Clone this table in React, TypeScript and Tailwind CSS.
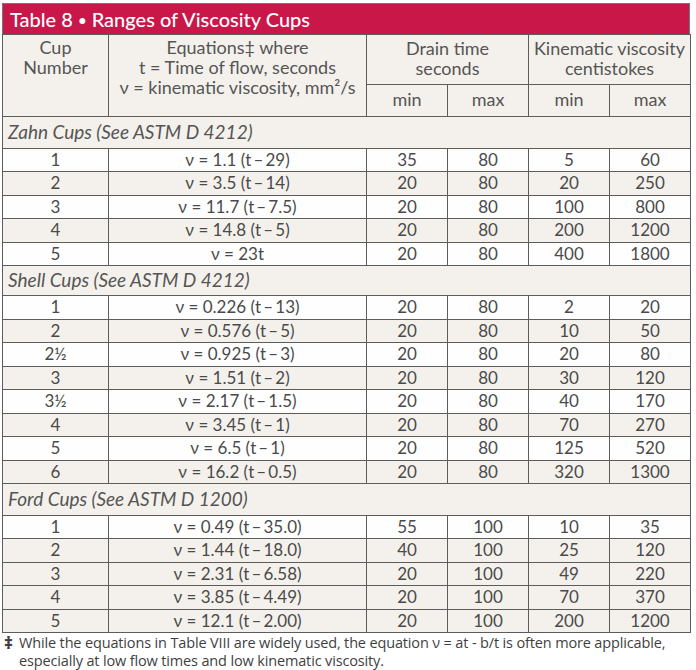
import React from "react";

type Row = { cup: string; eq: string; dmin: string; dmax: string; kmin: string; kmax: string; white: boolean };

const d = "\u2009\u2013\u2009";
const mk = (cup: string, a: string, b: string, dmin: string, dmax: string, kmin: string, kmax: string, white: boolean): Row => ({
  cup,
  eq: b === "" ? `\u03bd = ${a}` : `\u03bd = ${a} (t${d}${b})`,
  dmin,
  dmax,
  kmin,
  kmax,
  white,
});

const sections: { title: string; rows: Row[] }[] = [
  {
    title: "Zahn Cups (See ASTM D 4212)",
    rows: [
      mk("1", "1.1", "29", "35", "80", "5", "60", true),
      mk("2", "3.5", "14", "20", "80", "20", "250", false),
      mk("3", "11.7", "7.5", "20", "80", "100", "800", true),
      mk("4", "14.8", "5", "20", "80", "200", "1200", false),
      mk("5", "23t", "", "20", "80", "400", "1800", true),
    ],
  },
  {
    title: "Shell Cups (See ASTM D 4212)",
    rows: [
      mk("1", "0.226", "13", "20", "80", "2", "20", true),
      mk("2", "0.576", "5", "20", "80", "10", "50", false),
      mk("2\u00bd", "0.925", "3", "20", "80", "20", "80", true),
      mk("3", "1.51", "2", "20", "80", "30", "120", false),
      mk("3\u00bd", "2.17", "1.5", "20", "80", "40", "170", true),
      mk("4", "3.45", "1", "20", "80", "70", "270", false),
      mk("5", "6.5", "1", "20", "80", "125", "520", true),
      mk("6", "16.2", "0.5", "20", "80", "320", "1300", false),
    ],
  },
  {
    title: "Ford Cups (See ASTM D 1200)",
    rows: [
      mk("1", "0.49", "35.0", "55", "100", "10", "35", true),
      mk("2", "1.44", "18.0", "40", "100", "25", "120", false),
      mk("3", "2.31", "6.58", "20", "100", "49", "220", false),
      mk("4", "3.85", "4.49", "20", "100", "70", "370", false),
      mk("5", "12.1", "2.00", "20", "100", "200", "1200", false),
    ],
  },
];

const cell = "border border-[#5c5c5c] text-center p-0";

export default function App() {
  return (
    <div className="w-[696px] h-[670px] bg-white text-[#4a4a4a] overflow-hidden" style={{ fontFamily: "Lato, 'Open Sans', sans-serif" }}>
      <div className="ml-[2px] mt-[3px] w-[688px] border-t border-l border-r border-[#777]">
        <div className="h-[30px] bg-[#c9174a] text-white text-[20px] leading-[30px] pl-[7px] font-medium">
          Table 8 <span className="text-[15px] relative top-[-1px]">{"\u2022"}</span> Ranges of Viscosity Cups
        </div>
      </div>
      <table className="ml-[2px] w-[688px] table-fixed border-collapse text-[17px]">
        <colgroup>
          <col className="w-[106px]" />
          <col className="w-[258px]" />
          <col className="w-[81px]" />
          <col className="w-[81px]" />
          <col className="w-[81px]" />
          <col className="w-[81px]" />
        </colgroup>
        <tbody>
          <tr className="h-[50px] bg-[#f4f1ec] text-[18px] leading-[20px] text-[#555]">
            <td rowSpan={2} className={`${cell} align-top pt-[2px]`}>
              Cup
              <br />
              Number
            </td>
            <td rowSpan={2} className={`${cell} align-top pt-[2px]`}>
              Equations‡ where
              <br />t = Time of flow, seconds
              <br />
              {"\u03bd = kinematic viscosity, mm\u00b2/s"}
            </td>
            <td colSpan={2} className={`${cell} align-middle pb-[3px]`}>
              Drain time
              <br />
              seconds
            </td>
            <td colSpan={2} className={`${cell} align-middle pb-[3px]`}>
              Kinematic viscosity
              <br />
              centistokes
            </td>
          </tr>
          <tr className="h-[32px] bg-[#f4f1ec] text-[18px] text-[#555]">
            <td className={`${cell} pb-[2px]`}>min</td>
            <td className={`${cell} pb-[2px]`}>max</td>
            <td className={`${cell} pb-[2px]`}>min</td>
            <td className={`${cell} pb-[2px]`}>max</td>
          </tr>
          {sections.map((s, si) => (
            <React.Fragment key={s.title}>
              <tr className={`${si === 1 ? "h-[30px]" : "h-[31.5px]"} bg-[#f4f1ec]`}>
                <td colSpan={6} className="border border-[#5c5c5c] text-left pl-[5px] italic text-[19px] text-[#555]">
                  {s.title}
                </td>
              </tr>
              {s.rows.map((r, i) => (
                <tr key={i} className={`h-[23.5px] leading-[20px] ${r.white ? "bg-[#fefefe]" : "bg-[#f4f1ec]"}`}>
                  <td className={cell}>{r.cup}</td>
                  <td className={cell}>{r.eq}</td>
                  <td className={cell}>{r.dmin}</td>
                  <td className={cell}>{r.dmax}</td>
                  <td className={cell}>{r.kmin}</td>
                  <td className={cell}>{r.kmax}</td>
                </tr>
              ))}
            </React.Fragment>
          ))}
        </tbody>
      </table>
      <div className="flex pl-[4px] pt-[1px] text-[14.5px] leading-[18px] text-[#3f3f3f] whitespace-nowrap tracking-[-0.15px]" style={{ fontFamily: "'Open Sans', Lato, sans-serif" }}>
        <span className="w-[15px] font-extrabold text-[17px] leading-[18px]">‡</span>
        <span>
          While the equations in Table VIII are widely used, the equation ν = at - b/t is often more applicable,
          <br />
          especially at low flow times and low kinematic viscosity.
        </span>
      </div>
    </div>
  );
}
